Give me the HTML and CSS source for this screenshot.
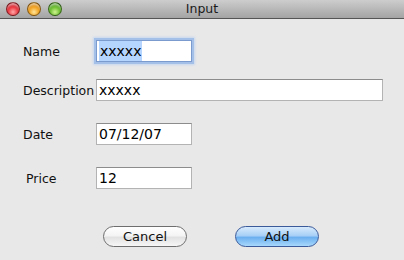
FILE: index.html
```html
<!DOCTYPE html>
<html>
<head>
<meta charset="utf-8">
<link rel="stylesheet" href="styles.css">
</head>
<body>
<div class="window">
  <div class="titlebar">
    <div class="lights">
      <span class="light red"></span>
      <span class="light orange"></span>
      <span class="light green"></span>
    </div>
    <div class="title">Input</div>
  </div>
  <div class="content">
    <div class="form">
      <label class="lbl lbl-name">Name</label>
      <div class="field short focused"><span class="sel">xxxxx</span></div>
      <label class="lbl lbl-desc">Description</label>
      <div class="field long">xxxxx</div>
      <label class="lbl lbl-date">Date</label>
      <div class="field short">07/12/07</div>
      <label class="lbl lbl-price">Price</label>
      <div class="field short">12</div>
    </div>
    <div class="buttons">
      <button class="btn cancel">Cancel</button>
      <button class="btn add">Add</button>
    </div>
  </div>
</div>
</body>
</html>
```
FILE: styles.css
```css
html, body {
  margin: 0;
  padding: 0;
  width: 404px;
  height: 260px;
  overflow: hidden;
  background: #e8e8e8;
  font-family: "DejaVu Sans", "Liberation Sans", sans-serif;
}
.window {
  width: 404px;
  height: 260px;
  display: flex;
  flex-direction: column;
}
.titlebar {
  height: 18px;
  background: linear-gradient(#cdcdcd, #a4a4a4);
  border-bottom: 1px solid #555;
  display: flex;
  align-items: center;
  position: relative;
}
.lights {
  display: flex;
  gap: 7px;
  padding-left: 6px;
}
.light {
  width: 14px;
  height: 14px;
  border-radius: 50%;
  box-sizing: border-box;
  border: 1px solid rgba(0,0,0,0.4);
  box-shadow: inset 0 3px 2px -1px rgba(255,255,255,0.55);
}
.red { background: radial-gradient(circle at 50% 75%, #ffa8a8 0%, #ea3a42 45%, #a00e18 100%); }
.orange { background: radial-gradient(circle at 50% 75%, #ffe69a 0%, #f2a424 45%, #b06800 100%); }
.green { background: radial-gradient(circle at 50% 75%, #d0f490 0%, #70c034 45%, #2c7410 100%); }
.title {
  position: absolute;
  left: 0;
  right: 0;
  top: 0;
  line-height: 18px;
  text-align: center;
  font-size: 12.5px;
  color: #1a1a1a;
  pointer-events: none;
}
.content {
  flex: 1;
  display: flex;
  flex-direction: column;
}
.form {
  display: grid;
  grid-template-columns: 73px auto;
  justify-content: start;
  align-items: center;
  padding: 21px 0 0 23px;
}
.lbl {
  font-size: 12.5px;
  color: #111;
}
.lbl-price { padding-left: 3px; }
.field {
  height: 22px;
  box-sizing: border-box;
  background: #fff;
  border: 1px solid #b3b3b3;
  border-top-color: #8c8c8c;
  font-size: 14px;
  color: #000;
  line-height: 20px;
  padding-left: 2px;
  white-space: nowrap;
}
.short { width: 96px; }
.long { width: 287px; }
.focused {
  border: 1px solid #7b9bcf;
  box-shadow: 0 0 0 2px #a4bfe8, 0 0 2px 3px #c6d6ee;
  padding-left: 2px;
}
.sel {
  background: #b5d5ff;
  padding: 2px 1px;
}
.form > :nth-child(1), .form > :nth-child(2) { margin-bottom: 17px; }
.form > :nth-child(3), .form > :nth-child(4) { margin-bottom: 22px; }
.form > :nth-child(5), .form > :nth-child(6) { margin-bottom: 22px; }
.buttons {
  display: flex;
  gap: 48px;
  padding: 37px 0 0 103px;
}
.btn {
  width: 84px;
  height: 21px;
  border-radius: 11px;
  font-family: "DejaVu Sans", "Liberation Sans", sans-serif;
  font-size: 13px;
  color: #111;
  padding: 0;
  box-sizing: border-box;
}
.cancel {
  border: 1px solid #6e6e6e;
  background: linear-gradient(#ffffff 0%, #f4f4f4 45%, #e2e2e2 55%, #f6f6f6 100%);
}
.add {
  border: 1px solid #3a5a9a;
  background: linear-gradient(#d8eafc 0%, #a8d0f6 45%, #6cb0f0 55%, #a8d8fc 100%);
}
```
